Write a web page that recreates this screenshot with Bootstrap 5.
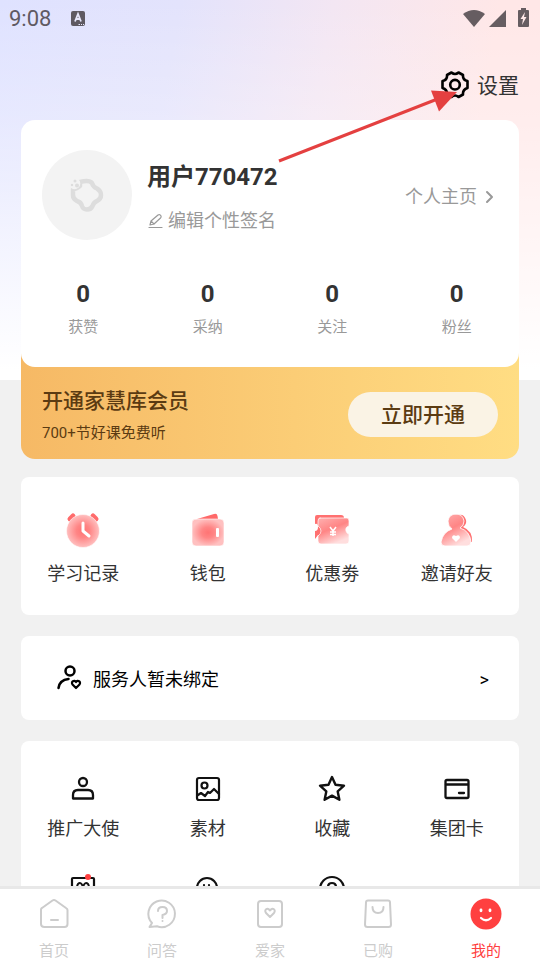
<!DOCTYPE html>
<html lang="zh-CN">
<head>
<meta charset="utf-8">
<meta name="viewport" content="width=device-width, initial-scale=1">
<title>我的</title>
<link href="https://cdn.jsdelivr.net/npm/bootstrap@5.3.0/dist/css/bootstrap.min.css" rel="stylesheet">
<style>
body{font-family:Roboto,"Noto Sans CJK SC",sans-serif;color:#333;background:#f1f1f1;font-size:18px;line-height:24px}
svg{display:block;fill:none;stroke:currentColor;stroke-linecap:round;stroke-linejoin:round;flex:none}
.scroller{min-height:0;overflow-y:auto;scrollbar-width:none;background:linear-gradient(180deg,rgba(255,255,255,0) 0,rgba(255,255,255,.25) 120px,#fff 370px,#fff 380px,#f1f1f1 380px),linear-gradient(100deg,#dfe2ff 0,#e3e3fc 26%,#f3e6f3 48%,#ffe7e7 72%,#ffe7e7 100%)}
.scroller::-webkit-scrollbar{display:none}
.status{height:36px;padding:2px 9px 0;color:#5f5a62;font-size:22px}
.settings{height:84px;padding:14px 21px 0;font-size:21px}
.settings a{color:#333}
.settings span{padding-top:2px}
.content{padding:0 21px}
.panel{background:#fff;border-radius:8px}
.profile{border-radius:14px;padding-top:30px;padding-bottom:28px}
.person{padding:0 21px}
.avatar{width:90px;height:90px;background:#f3f3f3;color:#ddd}
.who{margin-left:15px;padding-top:5px}
.username{font-size:24px;line-height:30px;font-weight:700;margin:0 0 17px}
.muted{color:#999}
.homepage{padding-top:3px}
.stats{margin-top:39px}
.stats strong{font-size:24px;line-height:30px}
.stats span{font-size:15px;margin-top:6px}
.member{margin-top:-14px;padding:33px 21px 16px;border-radius:0 0 14px 14px;background:linear-gradient(90deg,#f6b965,#fbcd76 55%,#ffdd83);color:#5b3b12}
.member h2{font-size:21px;line-height:30px;font-weight:500;margin:0 0 7px}
.member p{font-size:15px;line-height:20px;margin:0}
.open{width:150px;height:45px;background:#faf3e5;color:#5b3b12;font-size:21px;font-weight:500;padding:2px 0 0}
.open:hover{background:#fff8ea}
.features{margin-top:18px;padding:35px 0 29px}
.features a,.tools a{color:#333}
.features span{margin-top:14px}
.features svg{stroke:none}
.service{margin-top:21px;height:84px;padding:0 30px 0 34px;color:#000}
.service span{padding-top:3px}
.service-name{margin-left:10px}
.tools{margin-top:21px;padding:33px 0;row-gap:32px}
.tools svg{color:#111}
.tools span{margin-top:13px}
.tabs{border-top:3px solid #e8e8e8;background:#fff;padding:7px 0 0;height:74px;font-size:15px}
.tabs a{color:#ccc}
.tabs span{margin-top:7px;line-height:24px}
.tabs a.current{color:#ff4040}
.pointer{top:84px;left:272px;z-index:5;pointer-events:none}
</style>
<script src="https://cdn.jsdelivr.net/npm/bootstrap@5.3.0/dist/js/bootstrap.bundle.min.js"></script>
</head>
<body>
<div class="d-flex flex-column vh-100 position-relative">
<main class="scroller flex-grow-1">
  <div class="status d-flex align-items-center">
    <span>9:08</span>
    <svg class="ms-3" width="24" height="20" viewBox="0 0 24 20"><rect x="4" y="2" width="14" height="15" rx="2" fill="currentColor" stroke="none"/><path d="M8 12.500 11 5l3 7.500M9 10h4" stroke="#e7e7fc" stroke-width="1.800" stroke-linecap="butt" stroke-linejoin="miter"/><path d="M11.500 15.500h1.500m1 0h1m1 0h1" stroke="#e7e7fc" stroke-linecap="butt"/></svg>
    <svg class="ms-auto" width="70" height="22" viewBox="0 0 70 22"><g fill="#665d61" stroke="none"><path d="M2 6Q13-2 24 6L13 19Z"/><path d="M45 2v17H28Z"/><path d="M58 2h2V0h5v2h2q1 0 1 1v15q0 1-1 1H58q-1 0-1-1V3q0-1 1-1Z"/></g><path d="m64 4-4.500 7H62l-1 6 4.500-8H63Z" fill="#ffe9e9" stroke="none"/></svg>
  </div>
  <div class="settings d-flex justify-content-end align-items-center">
    <a href="#settings" class="d-flex align-items-center text-decoration-none">
      <svg class="me-2 text-black" width="28" height="28" viewBox="0 0 28 28" stroke-width="2.600"><path d="M10.500 1.500Q14 4.500 17.500 1.500L22 4Q21.500 9 26.500 10V17Q21.500 18.500 22 23.500L17.500 26Q14 23 10.500 26L6 23.500Q6.500 18.500 1.500 17V10Q6.500 9 6 4Z"/><circle cx="14" cy="13.700" r="4.800"/></svg>
      <span>设置</span>
    </a>
  </div>
  <div class="content">
    <section class="panel profile position-relative">
      <div class="person d-flex align-items-center">
        <div class="avatar rounded-circle d-flex align-items-center justify-content-center">
          <svg width="36" height="36" viewBox="0 0 36 36"><path d="M11 5Q20 2.500 23 6 24 10 28 11.500 32 14 32 18 32 22 28 24 25 25 23.500 29 22 32.500 18 32.500 14 32.500 13 29 12 25 8 24 4 22 4 18V12Q8 12 11 9Z" stroke-width="4.500"/><circle cx="5.500" cy="6.500" r="5.800" fill="#f3f3f3" stroke="none"/><g fill="currentColor" stroke="none"><circle cx="6" cy="4" r="1.500"/><circle cx="3" cy="8" r="1.200"/><circle cx="8" cy="8.500" r="2"/></g></svg>
        </div>
        <div class="who">
          <h1 class="username">用户770472</h1>
          <a href="#signature" class="muted text-decoration-none d-flex align-items-center">
            <svg class="me-1" width="17" height="18" viewBox="0 0 17 18" stroke-width="1.200"><path d="M3 13 4 9 11 3q2-1 3 1 .5 1-.5 2L7 12ZM4 9l3 3M2 15.500h13"/></svg>编辑个性签名
          </a>
        </div>
        <a href="#home" class="homepage muted text-decoration-none ms-auto d-flex align-items-center">个人主页
          <svg class="ms-1" width="17" height="18" viewBox="0 0 17 18" stroke-width="2" stroke-linecap="butt"><path d="m6 4 5 5-5 5"/></svg>
        </a>
      </div>
      <div class="stats row row-cols-4 g-0 text-center">
        <div class="col d-flex flex-column"><strong>0</strong><span class="muted">获赞</span></div>
        <div class="col d-flex flex-column"><strong>0</strong><span class="muted">采纳</span></div>
        <div class="col d-flex flex-column"><strong>0</strong><span class="muted">关注</span></div>
        <div class="col d-flex flex-column"><strong>0</strong><span class="muted">粉丝</span></div>
      </div>
    </section>
    <section class="member d-flex align-items-center justify-content-between">
      <div><h2>开通家慧库会员</h2><p>700+节好课免费听</p></div>
      <button type="button" class="btn open rounded-pill border-0">立即开通</button>
    </section>

    <nav class="panel features row row-cols-4 g-0" aria-label="常用">
      <a href="#history" class="col d-flex flex-column align-items-center text-decoration-none">
        <svg width="36" height="36" viewBox="0 0 36 36"><defs><radialGradient id="glow"><stop stop-color="#ff7474"/><stop offset=".4" stop-color="#ff8585"/><stop offset="1" stop-color="#ffc0c0"/></radialGradient><linearGradient id="fade" x2=".5" y2="1"><stop stop-color="#ffb0b0"/><stop offset=".5" stop-color="#ff8585"/><stop offset="1" stop-color="#ffdede"/></linearGradient></defs><path d="m5 7 3-3m20 0 3 3" stroke="#ff6b6b" stroke-width="5"/><circle cx="18" cy="19" r="16.500" fill="url(#glow)" stroke="#fff" stroke-width=".5"/><path d="M18 11v8l6 5" stroke="#fff" stroke-width="3"/></svg><span>学习记录</span></a>
      <a href="#wallet" class="col d-flex flex-column align-items-center text-decoration-none">
        <svg width="36" height="36" viewBox="0 0 36 36"><path d="m7 7 17-5q3-1 3.500 2l.5 3Z" fill="#ff6969"/><rect x="2" y="7" width="32" height="27" rx="4" fill="url(#glow)" stroke="#fff" stroke-width=".6"/><rect x="26" y="16" width="3" height="9" rx="1" fill="#fff"/></svg><span>钱包</span></a>
      <a href="#coupons" class="col d-flex flex-column align-items-center text-decoration-none">
        <svg width="36" height="36" viewBox="0 0 36 36"><path d="M3 3h24q3 0 3 3v17H4l-3 4v-8q3 0 3-4T1 12V5q0-2 2-2Z" fill="#ff7070"/><path d="M6 6h27q2 0 2 3v5q-4 1-3 5 1 3 3 3v7q0 3-3 3H7q-3 0-3-3v-5q3-2 3-5t-3-5V9q0-3 2-3Z" fill="url(#fade)" stroke="#fff" stroke-width=".7"/><path d="m16 15 3 4 3-4m-3 4v5m-3-4h6m-6 2.500h6" stroke="#fff" stroke-width="1.500" stroke-linecap="butt"/></svg><span>优惠劵</span></a>
      <a href="#invite" class="col d-flex flex-column align-items-center text-decoration-none">
        <svg width="36" height="36" viewBox="0 0 36 36"><path d="M20 3q5-1 7 5 1 4-3 7 10 4 9 15H19Z" fill="#ff7070"/><path d="M17 2q7 0 8 7 0 5-4 7 10 3 11 14 0 4-4 4H6q-4 0-4-4Q4 20 13 17q-4-3-4-8 1-7 8-7Z" fill="url(#fade)" stroke="#fff" stroke-width=".8"/><path d="M17 30 13 26q0-4 4-2 4-2 4 2Z" fill="#fff"/></svg><span>邀请好友</span></a>
    </nav>

    <a href="#service" class="panel service d-flex align-items-center text-decoration-none">
      <svg width="28" height="28" viewBox="0 0 28 28" stroke-width="2.500" stroke-linecap="butt"><circle cx="15" cy="7" r="4.500"/><path d="M3.500 24q1-8 10-9"/><path d="m21 24-3.500-3.500c-2-3 2-5 3.500-2.500 1.500-2.500 5.500-.5 3.500 2.500Z" stroke-width="2.200"/></svg>
      <span class="service-name">服务人暂未绑定</span><span class="ms-auto">&gt;</span>
    </a>

    <nav class="panel tools row row-cols-4 gx-0" aria-label="工具">
      <a href="#promote" class="col d-flex flex-column align-items-center text-decoration-none">
        <svg width="30" height="30" viewBox="0 0 30 30" stroke-width="2.300"><circle cx="15" cy="8" r="4"/><path d="M5 24.500V21q0-5 5-5h10q5 0 5 5v3.500Z"/></svg><span>推广大使</span></a>
      <a href="#material" class="col d-flex flex-column align-items-center text-decoration-none">
        <svg width="30" height="30" viewBox="0 0 30 30" stroke-width="2.200"><rect x="4" y="4" width="22" height="22" rx="2"/><circle cx="11.500" cy="11.500" r="3"/><path d="m5 21 3-2 4 3 3-4 2 1 4-4 5 5"/></svg><span>素材</span></a>
      <a href="#favourites" class="col d-flex flex-column align-items-center text-decoration-none">
        <svg width="30" height="30" viewBox="0 0 30 30" stroke-width="2.400"><path d="m15 3 3.500 7.700 8.500 1-6.300 5.700 1.700 8.400L15 21.600l-7.400 4.200 1.700-8.400L3 11.700l8.500-1Z"/></svg><span>收藏</span></a>
      <a href="#card" class="col d-flex flex-column align-items-center text-decoration-none">
        <svg width="30" height="30" viewBox="0 0 30 30" stroke-width="2.300"><rect x="3.500" y="6" width="23" height="18" rx="1.500"/><path d="M4 10.500h22M17 19h5"/></svg><span>集团卡</span></a>
      <a href="#gift" class="col d-flex flex-column align-items-center" aria-label="礼物">
        <svg width="30" height="30" viewBox="0 0 30 30" stroke-width="2.200"><rect x="4" y="5" width="22" height="21" rx="1"/><path d="M15 17q-8-1-5-6 3-3 5 3 2-6 5-3 3 5-5 6Z" stroke-width="2"/><circle cx="20" cy="4" r="3" fill="#ff4040" stroke="none"/></svg></a>
      <a href="#support" class="col d-flex flex-column align-items-center" aria-label="客服">
        <svg width="30" height="30" viewBox="0 0 30 30" stroke-width="2.200"><circle cx="14" cy="15" r="10"/><path d="M11 12v.1m5-.1v.1m3 1.900h5"/></svg></a>
      <a href="#help" class="col d-flex flex-column align-items-center" aria-label="帮助">
        <svg width="30" height="30" viewBox="0 0 30 30" stroke-width="2.200"><circle cx="15" cy="16" r="12"/><path d="M11 14q0-4 4-4t4 4q0 2-4 4"/></svg></a>
    </nav>
  </div>
</main>
<nav class="tabs row row-cols-5 g-0 flex-shrink-0" aria-label="主导航">
  <a href="#index" class="col d-flex flex-column align-items-center text-decoration-none">
    <svg width="36" height="36" viewBox="0 0 36 36" stroke-width="2"><path d="M5 13.500q0-1 1-1.500L16.500 4.500q1.500-1 3 0L30 12q1.500 1 1.500 2v14q0 3-3 3h-20Q5 31 5 28ZM15 24h7"/></svg><span>首页</span></a>
  <a href="#qa" class="col d-flex flex-column align-items-center text-decoration-none">
    <svg width="36" height="36" viewBox="0 0 36 36" stroke-width="2"><path d="M8 27A13.300 13.300 0 1 1 13 30.300L5.500 31 8 27Z"/><path d="M14 15q0-4 4.500-4T23 15q0 3-4.500 4v3m0 3v.1"/></svg><span>问答</span></a>
  <a href="#family" class="col d-flex flex-column align-items-center text-decoration-none">
    <svg width="36" height="36" viewBox="0 0 36 36" stroke-width="2"><rect x="6" y="5" width="24" height="26" rx="3"/><path d="m18 21-4-4c-2.500-3.500 2-6 4-2.500 2-3.500 6.500-1 4 2.500Z"/></svg><span>爱家</span></a>
  <a href="#orders" class="col d-flex flex-column align-items-center text-decoration-none">
    <svg width="36" height="36" viewBox="0 0 36 36" stroke-width="2"><path d="M8 4.500h20q2 0 2 2l1 22q0 2.500-2.500 2.500h-21Q5 31 5 28.500l1-22q0-2 2-2Z"/><path d="M12.500 11q0 6 5.500 6t5.500-6"/></svg><span>已购</span></a>
  <a href="#me" class="col d-flex flex-column align-items-center text-decoration-none current" aria-current="page">
    <svg width="36" height="36" viewBox="0 0 36 36"><circle cx="18" cy="18" r="15.500" fill="currentColor" stroke="none"/><path d="M13 14v.8m9-.8v.8" stroke="#fff" stroke-width="2.800"/><path d="M13 22q5 4.500 10 0" stroke="#fff" stroke-width="2.200"/></svg><span>我的</span></a>
</nav>
<svg class="pointer position-absolute" width="190" height="84" viewBox="0 0 190 84" aria-hidden="true"><path d="m7 77 161-63" stroke="#e44040" stroke-width="3" stroke-linecap="butt"/><path d="m185 8-26-1.500 8 21Z" fill="#e44040" stroke="none"/></svg>
</div>
</body>
</html>
